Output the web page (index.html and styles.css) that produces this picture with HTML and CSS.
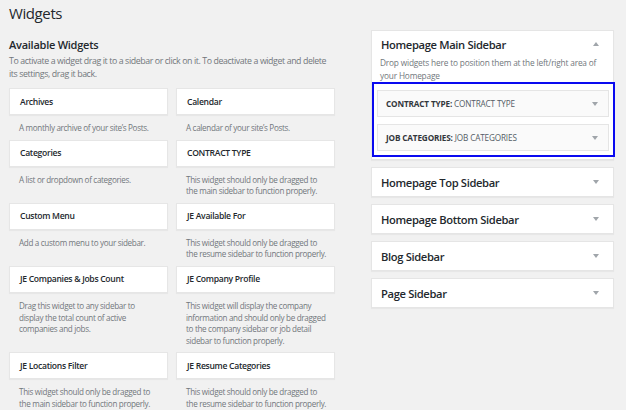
FILE: index.html
```html
<!DOCTYPE html>
<html>
<head>
<meta charset="utf-8">
<link rel="stylesheet" href="styles.css">
</head>
<body>
<div class="page">
  <h1 class="page-title">Widgets</h1>
  <div class="columns">
    <section class="available">
      <h2 class="section-title">Available Widgets</h2>
      <p class="section-desc">To activate a widget drag it to a sidebar or click on it. To deactivate a widget and delete<br>its settings, drag it back.</p>
      <div class="widget-grid">
        <div class="widget"><div class="widget-card">Archives</div><div class="widget-desc">A monthly archive of your site’s Posts.</div></div>
        <div class="widget"><div class="widget-card">Calendar</div><div class="widget-desc">A calendar of your site’s Posts.</div></div>
        <div class="widget"><div class="widget-card">Categories</div><div class="widget-desc">A list or dropdown of categories.</div></div>
        <div class="widget"><div class="widget-card">CONTRACT TYPE</div><div class="widget-desc">This widget should only be dragged to<br>the main sidebar to function properly.</div></div>
        <div class="widget"><div class="widget-card">Custom Menu</div><div class="widget-desc">Add a custom menu to your sidebar.</div></div>
        <div class="widget"><div class="widget-card">JE Available For</div><div class="widget-desc">This widget should only be dragged to<br>the resume sidebar to function properly.</div></div>
        <div class="widget"><div class="widget-card">JE Companies &amp; Jobs Count</div><div class="widget-desc">Drag this widget to any sidebar to<br>display the total count of active<br>companies and jobs.</div></div>
        <div class="widget"><div class="widget-card">JE Company Profile</div><div class="widget-desc">This widget will display the company<br>information and should only be dragged<br>to the company sidebar or job detail<br>sidebar to function properly.</div></div>
        <div class="widget"><div class="widget-card">JE Locations Filter</div><div class="widget-desc">This widget should only be dragged to<br>the main sidebar to function properly.</div></div>
        <div class="widget"><div class="widget-card">JE Resume Categories</div><div class="widget-desc">This widget should only be dragged to<br>the resume sidebar to function properly.</div></div>
      </div>
    </section>
    <section class="sidebars">
      <div class="sidebar open">
        <div class="sidebar-head"><span class="sidebar-name">Homepage Main Sidebar</span><span class="arrow up"></span></div>
        <p class="sidebar-desc">Drop widgets here to position them at the left/right area of<br>your Homepage</p>
        <div class="highlight">
          <div class="placed"><span><b>CONTRACT TYPE:</b> CONTRACT TYPE</span><span class="arrow down"></span></div>
          <div class="placed"><span><b>JOB CATEGORIES:</b> JOB CATEGORIES</span><span class="arrow down"></span></div>
        </div>
      </div>
      <div class="sidebar"><div class="sidebar-head"><span class="sidebar-name">Homepage Top Sidebar</span><span class="arrow down"></span></div></div>
      <div class="sidebar"><div class="sidebar-head"><span class="sidebar-name">Homepage Bottom Sidebar</span><span class="arrow down"></span></div></div>
      <div class="sidebar"><div class="sidebar-head"><span class="sidebar-name">Blog Sidebar</span><span class="arrow down"></span></div></div>
      <div class="sidebar"><div class="sidebar-head"><span class="sidebar-name">Page Sidebar</span><span class="arrow down"></span></div></div>
    </section>
  </div>
</div>
</body>
</html>
```

FILE: styles.css
```css
html, body {
  margin: 0;
  padding: 0;
  background: #f1f1f1;
  font-family: "Open Sans", "DejaVu Sans", sans-serif;
  color: #23282d;
  overflow: hidden;
}
.page {
  padding: 2px 12px 0 9px;
}
.page-title {
  margin: 0;
  font-size: 15px;
  letter-spacing: -0.4px;
  font-weight: 400;
  line-height: 22px;
  color: #23282d;
}
.columns {
  display: flex;
  gap: 36px;
  align-items: flex-start;
}
.available {
  width: 326px;
  flex: none;
}
.section-title {
  margin: 13px 0 0;
  font-size: 11px;
  letter-spacing: -0.25px;
  font-weight: 600;
  line-height: 16px;
}
.section-desc {
  margin: 2px 0 0;
  font-size: 8.8px;
  letter-spacing: -0.4px;
  line-height: 13px;
  color: #72777c;
  white-space: nowrap;
}
.widget-grid {
  margin-top: 7px;
  display: grid;
  grid-template-columns: 159px 159px;
  column-gap: 8px;
}
.widget-card {
  height: 27px;
  box-sizing: border-box;
  background: #fff;
  border: 1px solid #e6e6e6;
  box-shadow: 0 1px 1px rgba(0,0,0,0.04);
  padding: 0 10px;
  display: flex;
  align-items: center;
  font-size: 8.6px;
  letter-spacing: -0.3px;
  font-weight: 600;
  color: #23282d;
}
.widget-desc {
  padding: 7px 4px 6px 10px;
  font-size: 8.1px;
  letter-spacing: -0.32px;
  line-height: 11.6px;
  color: #72777c;
  white-space: nowrap;
}
.sidebars {
  width: 243px;
  flex: none;
  margin-top: 6px;
  display: flex;
  flex-direction: column;
  gap: 7px;
}
.sidebar {
  background: #fff;
  border: 1px solid #e5e5e5;
  box-shadow: 0 1px 1px rgba(0,0,0,0.04);
}
.sidebar-head {
  height: 28px;
  display: flex;
  align-items: center;
  justify-content: space-between;
  padding: 0 14px 0 9px;
}
.sidebar.open .sidebar-head {
  height: 24px;
  padding-top: 1px;
}
.sidebar-name {
  font-size: 11.2px;
  letter-spacing: -0.35px;
  font-weight: 600;
  color: #23282d;
}
.arrow {
  width: 0;
  height: 0;
  border-left: 3px solid transparent;
  border-right: 3px solid transparent;
}
.arrow.down {
  border-top: 4px solid #a0a5aa;
}
.arrow.up {
  border-bottom: 4px solid #a0a5aa;
}
.sidebar-desc {
  margin: 0;
  padding: 0 6px 0 8px;
  font-size: 8.3px;
  letter-spacing: -0.18px;
  line-height: 13px;
  color: #72777c;
  white-space: nowrap;
}
.highlight {
  margin: 0 -2px 2px 0;
  border: 2px solid #0a0af0;
  padding: 6px 4px 4px 3px;
  display: flex;
  flex-direction: column;
  gap: 7px;
}
.placed {
  height: 27px;
  box-sizing: border-box;
  background: #fafafa;
  border: 1px solid #e5e5e5;
  display: flex;
  align-items: center;
  justify-content: space-between;
  padding: 0 10px 0 8px;
  font-size: 8.2px;
  letter-spacing: -0.15px;
  color: #555d66;
}
.placed b {
  font-weight: 700;
  color: #32373c;
}
```
